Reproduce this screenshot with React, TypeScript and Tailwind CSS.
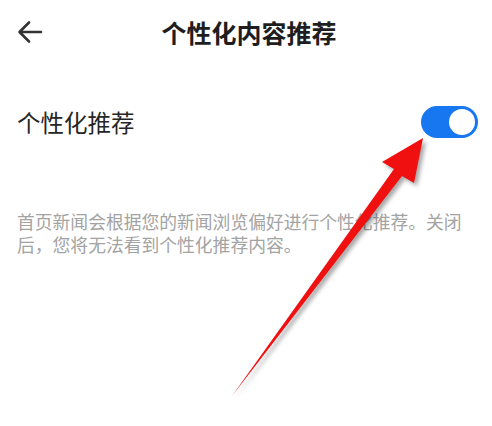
import React from "react";

export default function App() {
  return (
    <div
      className="relative w-[492px] h-[426px] bg-white overflow-hidden"
      style={{ fontFamily: '"Noto Sans CJK SC", "Noto Sans", sans-serif' }}
    >
      {/* Header */}
      <div className="flex items-center h-[64px] px-[17px]">
        <svg width="26" height="24" viewBox="0 0 26 24" className="shrink-0">
          <path
            d="M24 12H3M12 2.5L2.5 12L12 21.5"
            fill="none"
            stroke="#333"
            strokeWidth="2.6"
            strokeLinecap="round"
            strokeLinejoin="round"
          />
        </svg>
        <div className="flex-1 text-center text-[25px] leading-[30px] font-bold text-[#1e1e1e] pl-[6px]">
          个性化内容推荐
        </div>
        <div className="w-[26px] shrink-0" />
      </div>

      {/* Row */}
      <div className="flex items-center justify-between h-[60px] mt-[28px] pl-[17px] pr-[14px]">
        <span className="text-[23.5px] leading-[30px] text-[#262626]">个性化推荐</span>
        <div className="w-[57px] h-[32px] rounded-full bg-[#1677f0] flex items-center justify-end pr-[3px]">
          <div className="w-[26px] h-[26px] rounded-full bg-white" />
        </div>
      </div>

      {/* Description */}
      <p className="mt-[58px] px-[17px] text-[17.8px] leading-[23px] text-[#a3a3a3]">
        首页新闻会根据您的新闻浏览偏好进行个性化推荐。关闭
        <br />
        后，您将无法看到个性化推荐内容。
      </p>

      {/* Red annotation arrow */}
      <svg
        className="absolute left-0 top-0 pointer-events-none"
        width="492"
        height="426"
        viewBox="0 0 492 426"
        style={{ filter: "drop-shadow(3px 3px 2px rgba(0,0,0,0.35))" }}
      >
        <polygon
          points="232,396 402,176 414,183 423,138 382,162 394,169"
          fill="#f01010"
        />
      </svg>
    </div>
  );
}
